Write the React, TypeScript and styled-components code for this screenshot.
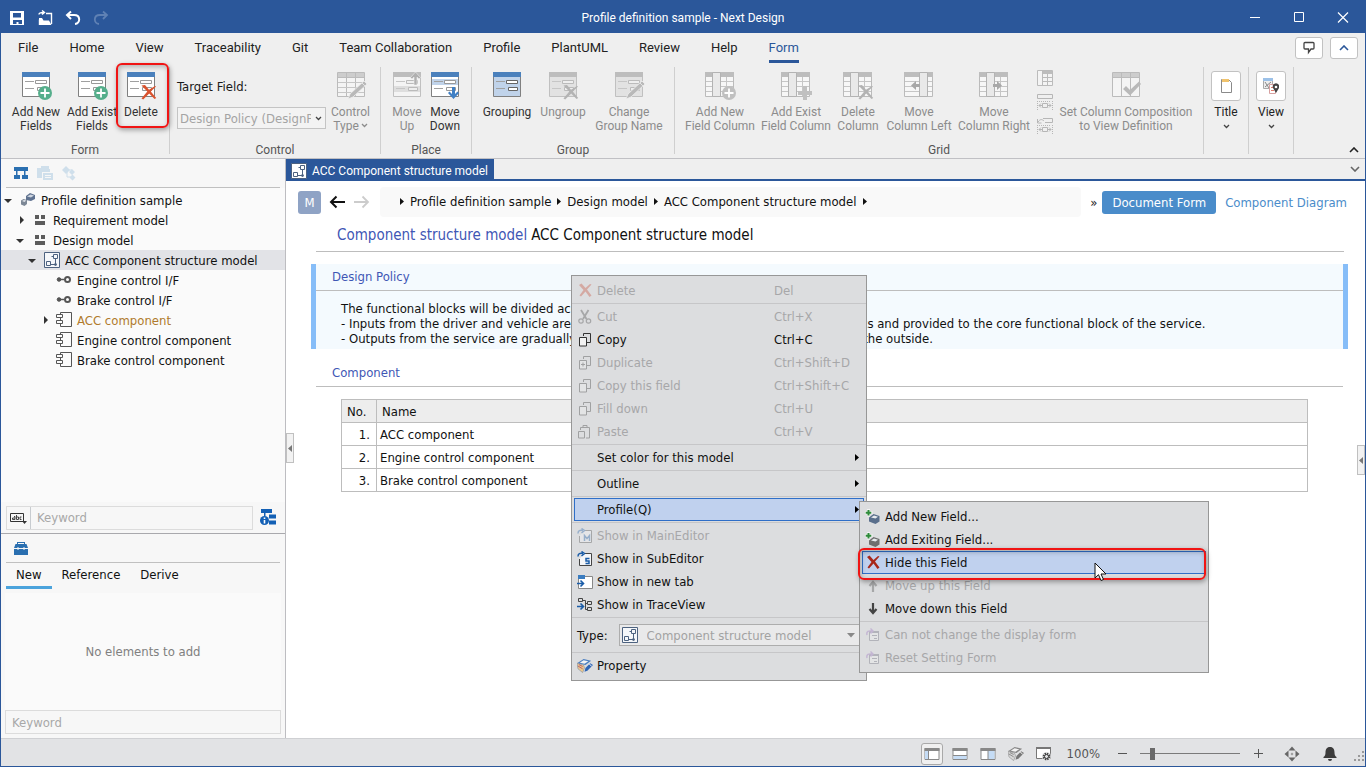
import React from "react";
import styled, { createGlobalStyle, css } from "styled-components";

const uiFont = '"DejaVu Sans Condensed", "DejaVu Sans", sans-serif';
const chromeFont = 'Roboto, "Open Sans", sans-serif';
const brand = "#2b579a";

const GlobalStyle = createGlobalStyle`
  *, *::before, *::after { box-sizing: border-box; }
  body { margin: 0; background: #fff; }
  button, input, select { font: inherit; color: inherit; margin: 0; }
  svg { display: block; flex: none; }
`;

const Window = styled.div`
  position: relative;
  min-height: 100vh;
  display: flex;
  flex-direction: column;
  border: solid ${brand};
  border-width: 0 1px 1px;
  background: #fff;
  color: #1a1a1a;
  font: 13px/15px ${uiFont};
  overflow: hidden;
`;

/* ---------- title bar ---------- */

const TitleBar = styled.header`
  display: grid;
  grid-template-columns: 1fr auto 1fr;
  align-items: center;
  height: 33px;
  padding: 2px 8px 0;
  background: ${brand};
  color: #fff;
  font: 12px/16px ${chromeFont};
`;

const QuickTools = styled.div`
  display: flex;
  gap: 12px;
`;

const WindowControls = styled.div`
  display: flex;
  justify-content: flex-end;
  gap: 28px;
  padding-right: 6px;
`;

const PlainButton = styled.button`
  display: flex;
  align-items: center;
  justify-content: center;
  min-width: 16px;
  min-height: 16px;
  padding: 0;
  border: 0;
  background: none;
`;

/* ---------- ribbon ---------- */

const TabRow = styled.nav`
  display: flex;
  align-items: flex-start;
  height: 33px;
  padding: 0 7px 0 17px;
  background: #efefef;
  font: 13px/16px ${chromeFont};
`;

const TabList = styled.div`
  display: flex;
  flex: 1;
  gap: 31px;
`;

const RibbonTab = styled.button<{ $active?: boolean }>`
  height: 30px;
  padding: 2px 0 0;
  border: 0;
  border-bottom: 3px solid ${(p) => (p.$active ? brand : "transparent")};
  background: none;
  color: ${(p) => (p.$active ? brand : "#222")};
  white-space: nowrap;
`;

const TabTools = styled.div`
  display: flex;
  gap: 7px;
  padding-top: 4px;
`;

const ToolBox = styled.button`
  display: flex;
  align-items: center;
  justify-content: center;
  width: 28px;
  height: 22px;
  padding: 0;
  border: 1px solid #c2c2c2;
  border-radius: 3px;
  background: #fff;
`;

const Ribbon = styled.div`
  display: flex;
  height: 93px;
  border-bottom: 1px solid #c0c0c4;
  background: #efefef;
  font: 12px/14px ${chromeFont};
`;

const RibbonGroup = styled.section`
  display: flex;
  flex-direction: column;
  justify-content: space-between;
  flex: none;
  margin: 1px 0 4px;
  padding: 0 7px;
  border-right: 1px solid #cfcfcf;
`;

const GroupItems = styled.div`
  display: flex;
  flex: 1;
  align-items: flex-start;
`;

const GroupLabel = styled.div`
  color: #555;
  text-align: center;
  margin-bottom: -3px;
`;

const RibbonButton = styled.button<{ $width: number }>`
  display: flex;
  flex-direction: column;
  align-items: center;
  width: ${(p) => p.$width}px;
  padding: 3px 0 0;
  border: 0;
  background: none;
  color: #333;
  line-height: 14px;
  white-space: nowrap;
  &:disabled { color: #8c8c8c; }
  svg { margin-bottom: 1px; }
`;

const DropLabel = styled.span`
  display: flex;
  align-items: center;
  gap: 2px;
`;

const TargetField = styled.div`
  display: flex;
  flex-direction: column;
  gap: 13px;
  padding-top: 12px;
  margin-right: 2px;
  font: 13px/15px ${uiFont};
`;

const SelectWrap = styled.div`
  position: relative;
  display: flex;
  min-width: 0;
  svg { position: absolute; pointer-events: none; }
`;

const FieldSelect = styled.select`
  appearance: none;
  width: 149px;
  height: 22px;
  padding: 0 14px 0 2px;
  border: 1px solid #c4c4c4;
  border-radius: 0;
  background: #f3f3f3;
  overflow: hidden;
  &:disabled { color: #a4a4a4; opacity: 1; }
  & + svg { right: 4px; top: 9px; }
`;

const SmallStack = styled.div`
  display: flex;
  flex-direction: column;
  gap: 8px;
  padding: 3px 3px 0 5px;
`;

const Highlight = styled.div`
  position: absolute;
  pointer-events: none;
  border: 2px solid #f01414;
  border-radius: 6px;
  box-shadow: 1px 2px 5px rgba(0, 0, 0, 0.35), inset 1px 2px 5px rgba(0, 0, 0, 0.25);
`;

const DeleteHighlight = styled(Highlight)`
  left: 115px;
  top: 63px;
  width: 53px;
  height: 65px;
`;

const HideHighlight = styled(Highlight)`
  left: -2px;
  right: 2px;
  top: 46px;
  height: 32px;
`;

const CardButton = styled.button`
  display: flex;
  flex-direction: column;
  align-items: center;
  width: 30px;
  padding: 4px 0 0;
  border: 0;
  background: none;
  color: #222;
  font-size: 12px;
`;

const CardFace = styled.span`
  display: flex;
  align-items: center;
  justify-content: center;
  width: 30px;
  height: 30px;
  margin-bottom: 4px;
  border: 1px solid #c2c2c2;
  border-radius: 3px;
  background: #fff;
  & + span { margin-bottom: 5px; }
`;

const RibbonCollapse = styled(PlainButton)`
  margin: auto 3px 0 auto;
`;

/* ---------- body ---------- */

const Body = styled.div`
  display: flex;
  flex: 1;
`;

const Sidebar = styled.aside`
  display: flex;
  flex-direction: column;
  flex: 0 0 285px;
  border-right: 1px solid #bdbdc1;
  background: #f7f7f7;
`;

const SideTools = styled.div`
  display: flex;
  align-items: center;
  gap: 8px;
  height: 29px;
  margin: 0 5px;
  padding: 0 7px;
  border-bottom: 1px solid #c0c0c0;
`;

const TreeList = styled.ul`
  flex: 1;
  margin: 0;
  padding: 2px 0 0;
  list-style: none;
  background: #fafafa;
`;

const TreeRow = styled.li<{ $level: number; $selected?: boolean; $accent?: boolean }>`
  display: flex;
  align-items: center;
  height: 20px;
  padding-left: ${(p) => 1 + p.$level * 12}px;
  background: ${(p) => (p.$selected ? "#e2e3e7" : "transparent")};
  color: ${(p) => (p.$accent ? "#b07a2c" : "#111")};
  white-space: nowrap;
`;

const Expander = styled.span`
  display: flex;
  justify-content: center;
  width: 12px;
  margin-right: 6px;
`;

const TreeIcon = styled.span`
  display: flex;
  justify-content: center;
  width: 16px;
  margin-right: 5px;
`;

const SearchRow = styled.div`
  display: flex;
  align-items: center;
  gap: 7px;
  height: 32px;
  padding: 0 8px 0 5px;
  border-bottom: 1px solid #a9a9ad;
`;

const SearchBox = styled.div`
  display: flex;
  flex: 1;
  height: 24px;
  border: 1px solid #dcdcdc;
`;

const SearchMode = styled(PlainButton)`
  width: 24px;
  border-right: 1px solid #c8ccd0;
`;

const keywordText = css`
  color: #222;
  background: #f7f7f7;
  &::placeholder { color: #a8a8a8; opacity: 1; }
`;

const SearchInput = styled.input`
  flex: 1;
  min-width: 0;
  padding: 0 6px;
  border: 0;
  ${keywordText}
`;

const PaletteTabs = styled.div`
  display: flex;
  padding: 0 5px;
  height: 30px;
`;

const PaletteTab = styled.button<{ $active?: boolean }>`
  height: 26px;
  padding: 0 10px;
  border: 0;
  border-bottom: 3px solid ${(p) => (p.$active ? "#4ba3dc" : "transparent")};
  background: none;
  color: #111;
`;

const PaletteEmpty = styled.div`
  display: flex;
  align-items: center;
  justify-content: center;
  height: 117px;
  margin: 0 4px;
  background: #fafafa;
  color: #808080;
`;

const PaletteInput = styled.input`
  height: 24px;
  margin: 0 4px 4px;
  padding: 0 6px;
  border: 1px solid #dcdcdc;
  ${keywordText}
`;

const Main = styled.main`
  position: relative;
  flex: 1;
  min-width: 0;
  background: #fff;
`;

const DocTabs = styled.div`
  display: flex;
  align-items: center;
  justify-content: space-between;
  height: 22px;
  padding-right: 2px;
  border-bottom: 2px solid ${brand};
  background: #efefef;
`;

const DocTab = styled.button`
  display: flex;
  align-items: center;
  gap: 5px;
  height: 22px;
  margin-bottom: -2px;
  padding: 2px 6px 0 5px;
  border: 0;
  background: ${brand};
  color: #fff;
  font: 12px/14px ${chromeFont};
  white-space: nowrap;
`;

const NavRow = styled.div`
  display: flex;
  align-items: center;
  height: 30px;
  margin: 6px 18px 0 12px;
`;

const ModelBadge = styled.span`
  width: 23px;
  margin-right: 8px;
  border-radius: 3px;
  background: #8fa3c5;
  color: #fff;
  line-height: 23px;
  text-align: center;
`;

const NavArrows = styled.div`
  display: flex;
  gap: 9px;
  margin-right: 10px;
`;

const Breadcrumbs = styled.div`
  display: flex;
  flex: 1;
  align-items: center;
  gap: 6px;
  height: 30px;
  margin-right: 9px;
  padding: 0 0 1px 20px;
  border-radius: 4px;
  background: #f9f9f9;
  color: #111;
  white-space: nowrap;
`;

const CrumbLink = styled.a`
  color: inherit;
  text-decoration: none;
`;

const ViewButton = styled.button`
  height: 23px;
  margin: 0 9px 0 5px;
  padding: 0 10px;
  border: 0;
  border-radius: 3px;
  background: #4a8cca;
  color: #fff;
`;

const ViewLink = styled.a`
  color: #4a8cca;
  text-decoration: none;
`;

const Form = styled.div`
  padding: 0 17px 0 25px;
`;

const FormTitle = styled.h1`
  display: flex;
  gap: 4px;
  margin: 0 4px 12px 5px;
  padding: 9px 0 7px 21px;
  border-bottom: 1px solid #bdbdbd;
  color: #111;
  font: 15px/18px ${uiFont};
`;

const blue = "#3f57b5";

const TitleKind = styled.span`
  color: ${blue};
`;

const Section = styled.section<{ $selected?: boolean }>`
  border: solid ${(p) => (p.$selected ? "#86bdf8" : "transparent")};
  border-width: 0 5px;
  background: ${(p) => (p.$selected ? "#f4fafe" : "transparent")};
`;

const SectionTitle = styled.h2`
  margin: 0;
  padding: 5px 0 6px 16px;
  border-bottom: 1px solid #bdbdbd;
  color: ${blue};
  font: 13px/15px ${uiFont};
`;

const Policy = styled.p`
  margin: 0;
  padding: 10px 0 3px 25px;
  color: #111;
  white-space: pre;
  overflow: hidden;
`;

const FieldTable = styled.table`
  width: calc(100% - 60px);
  margin: 12px 0 0 25px;
  border-collapse: collapse;
  color: #111;
  th, td { height: 23px; padding: 0 3px; border: 1px solid #bdbdbd; text-align: left; font-weight: normal; }
  th { background: #ededed; padding: 0 5px; }
  td:first-child { width: 35px; padding-right: 6px; text-align: right; }
`;

const SpacedSection = styled(Section)`
  margin-top: 11px;
`;

const SplitHandle = styled.button<{ $side: "left" | "right"; $top: number }>`
  position: absolute;
  ${(p) => p.$side}: 0;
  top: ${(p) => p.$top}px;
  display: flex;
  align-items: center;
  justify-content: center;
  width: 8px;
  height: 30px;
  padding: 0;
  border: 1px solid #c0c0c0;
  background: #f2f2f2;
`;

/* ---------- menus ---------- */

const Menu = styled.div`
  position: absolute;
  padding: 3px 2px;
  border: 1px solid #979797;
  background: #dcdddf;
  color: #111;
`;

const ContextMenu = styled(Menu)`
  left: 570px;
  top: 275px;
  width: 296px;
`;

const SubMenu = styled(Menu)`
  left: 858px;
  top: 501px;
  width: 350px;
`;

const MenuRow = styled.button<{ $hot?: boolean }>`
  display: flex;
  align-items: center;
  gap: 4px;
  width: 100%;
  height: 23px;
  padding: 0 4px 0 2px;
  border: 1px solid ${(p) => (p.$hot ? "#2f6fc8" : "transparent")};
  background: ${(p) => (p.$hot ? "#c0d1ee" : "transparent")};
  color: #111;
  text-align: left;
  &:disabled { color: #a7a7a9; }
  &:disabled svg { opacity: 0.35; }
`;

const MenuIcon = styled.span`
  display: flex;
  justify-content: center;
  flex: 0 0 16px;
`;

const MenuText = styled.span`
  flex: 1;
`;

const Shortcut = styled.span`
  width: 85px;
`;

const MenuRule = styled.hr`
  height: 1px;
  margin: 1px -2px;
  border: 0;
  background: #c6c6c8;
`;

const TypeRow = styled.label`
  display: flex;
  align-items: center;
  gap: 11px;
  height: 32px;
  padding-left: 3px;
`;

const TypeSelect = styled.select`
  appearance: none;
  width: 244px;
  height: 22px;
  padding: 0 0 0 27px;
  border: 1px solid #adadad;
  border-radius: 0;
  background: #e9e9ea;
  &:disabled { color: #a2a2a2; opacity: 1; }
  & ~ svg:nth-of-type(1) { left: 3px; top: 3px; }
  & ~ svg:nth-of-type(2) { right: 8px; top: 9px; }
`;

const Pointer = styled.svg`
  position: absolute;
  left: 234px;
  top: 60px;
`;

/* ---------- status bar ---------- */

const StatusBar = styled.footer`
  display: flex;
  align-items: center;
  justify-content: flex-end;
  height: 28px;
  padding-top: 2px;
  border-top: 1px solid #cfd0d3;
  background: #e2e3e5;
  color: #555;
`;

const StatusViews = styled.div`
  display: flex;
  align-items: center;
  gap: 6px;
  margin-right: 12px;
`;

const StatusButton = styled(PlainButton)<{ $active?: boolean }>`
  width: 22px;
  height: 22px;
  border: 1px solid ${(p) => (p.$active ? "#a9a9a9" : "transparent")};
  border-radius: 3px;
  background: ${(p) => (p.$active ? "#f0f0f0" : "none")};
`;

const Zoom = styled.div`
  display: flex;
  align-items: center;
  gap: 10px;
  margin: 0 18px 0 14px;
`;

const ZoomRange = styled.input`
  appearance: none;
  width: 100px;
  height: 12px;
  background: linear-gradient(#7a7a7a, #7a7a7a) center / 100% 1px no-repeat;
  &::-webkit-slider-thumb {
    appearance: none;
    width: 5px;
    height: 12px;
    background: #6a6a6a;
  }
`;

const StatusEnd = styled.div`
  display: flex;
  align-items: center;
  gap: 22px;
`;

const Grip = styled.svg`
  margin: 6px 0 0 -6px;
`;

/* ---------- icons ---------- */

const Chevron = ({ up, small, color = "#444" }: { up?: boolean; small?: boolean; color?: string }) => (
  <svg
    width={small ? 7 : 10}
    height={small ? 5 : 6}
    viewBox={small ? "0 0 7 5" : "0 0 10 6"}
    fill="none"
    stroke={color}
    strokeWidth={small ? 1.3 : 1.6}
  >
    <path d={small ? "M1 1 3.500 3.500 6 1" : up ? "M1 5 5 1 9 5" : "M1 1 5 5 9 1"} />
  </svg>
);

type Badge = "plus" | "solidPlus" | "cross" | "pencil" | "up" | "down" | "left" | "right" | "check";

const BadgeMark = ({ kind, muted }: { kind: Badge; muted?: boolean }) => {
  const tone = muted ? "#b9b9b9" : "#4a80bc";
  switch (kind) {
    case "plus":
      return (
        <g>
          <circle cx="25" cy="23" r="7" fill={muted ? "#c0c0c0" : "#55ae8b"} />
          <path d="M25 18.500v9M20.500 23h9" stroke="#fff" strokeWidth="1.800" />
        </g>
      );
    case "solidPlus":
      return <path d="M23 16h4v5h5v4h-5v5h-4v-5h-5v-4h5z" fill="#c0c0c0" />;
    case "cross":
      return (
        <path
          d="M16.500 15.500 20 15l4 4.800 6-3.800 1 .5-5.200 5 5.400 6.500-1.700 1-5.300-5.600-6 6-1.700-.8 5.800-7z"
          fill={muted ? "#b3b3b3" : "#d9532f"}
        />
      );
    case "pencil":
      return (
        <g stroke="#efefef" strokeWidth=".8" fill={tone}>
          <path d="M29 11l3 3L18 27l-5 2 2-5z" />
          <path d="M27 13l3 3" />
        </g>
      );
    case "up":
      return <path d="M24.500 2l5 5.500-1.500 1.500-2-2v8h-3V7l-2 2-1.500-1.500z" fill="#b0b0b0" stroke="#efefef" strokeWidth=".6" />;
    case "down":
      return <path d="M24.500 29l-5.500-6 1.500-1.500 2.500 2.500v-7h3v7l2.500-2.500 1.500 1.500z" fill="#3f7fc4" />;
    case "left":
      return <path d="M8 15.500l5-4.500v3h4v3h-4v3z" fill="#a8a8a8" />;
    case "right":
      return <path d="M24 15.500l-5-4.500v3h-4v3h4v3z" fill="#a8a8a8" />;
    case "check":
      return <path d="M13 19l3-3 4 4 9-8.500 2 2.500-11 11.500z" fill="#b9b9b9" />;
  }
};

const FormIcon = ({ badge, muted, fill, band }: { badge?: Badge; muted?: boolean; fill?: string; band?: "top" | "bottom" }) => {
  const line = muted ? "#c0c0c0" : "#808080";
  return (
    <svg width="34" height="34" viewBox="-1 0 34 34">
      <path d="M2.500 3.500h27v23h-27z" fill={fill ?? (muted ? "#f4f4f4" : "#fff")} stroke={line} />
      {band === "top" && <path d="M3 9h26v6H3z" fill="#c0d3ea" />}
      {band === "bottom" && <path d="M3 16h26v6H3z" fill="#dedede" />}
      <path d="M2 2h28v5H2z" fill={muted ? "#bdbdbd" : "#4a80bc"} />
      <path d="M5 11.500h9M5 18.500h9" stroke={muted ? "#c6c6c6" : "#a0a0a0"} />
      <path d="M15.500 10.500h11v3h-11zM17.500 17.500h9v3h-9z" fill={muted ? "#eee" : "#fff"} stroke={fill && !muted ? "#666" : muted ? "#bbb" : "#999"} />
      {badge && <BadgeMark kind={badge} muted={muted} />}
    </svg>
  );
};

const GridIcon = ({ badge, shift = 0 }: { badge: Badge; shift?: number }) => (
  <svg width="34" height="34" viewBox="-1 0 34 34">
    <path d="M1.500 2.500h28v24h-28z" fill="#f7f7f7" stroke="#bbb" />
    <path d="M1 2h29v5H1z" fill="#bdbdbd" />
    <path d="M2 11.500h27M2 16.500h27M2 21.500h27M22.500 7v19" stroke="#c6c6c6" />
    <path d={`M${8.5 + shift} 2.500h8v24h-8z`} fill="#e9e9e9" stroke="#b3b3b3" />
    <BadgeMark kind={badge} muted />
  </svg>
);

const PlainTableIcon = ({ badge, split }: { badge: Badge; split?: boolean }) => (
  <svg width="34" height="34" viewBox="-1 0 34 34">
    <path d="M2.500 2.500h27v24h-27z" fill="#f4f4f4" stroke="#bbb" />
    <path d="M3 3h26v4H3z" fill="#cdcdcd" />
    <path d="M2 7.500h28M11.500 3v23M20.500 3v23" stroke="#bbb" />
    {split && <path d="M3 12.500h26M3 17.500h26M3 22.500h26" stroke="#c6c6c6" />}
    <BadgeMark kind={badge} muted />
  </svg>
);

const MiniGrid = () => (
  <svg width="16" height="16" viewBox="0 0 16 16">
    <path d="M.5.5h15v15H.5z" fill="#f4f4f4" stroke="#bbb" />
    <path d="M6 1h9v3H6z" fill="#bdbdbd" />
    <path d="M5.500 1v14M6 7.500h9M6 11.500h9M10.500 4v11" stroke="#bbb" />
  </svg>
);

const MiniFit = ({ undo }: { undo?: boolean }) => (
  <svg width="16" height="16" viewBox="0 0 16 16" fill="none" stroke="#b6b6b6">
    <path d={undo ? "M6 .5h9.500v4H8M.5 1v4h4M1 4C3 1 5 1 7 3" : "M.5.5h15v4H.5z"} />
    <path d="M.5 7v9M15.500 7v9M2 7.500h12" strokeDasharray="1 1" />
    <path d="M5.500 9.500h5v4h-5zM2 11.500h3M11 11.500h3M4 9.500l-2 2 2 2M12 9.500l2 2-2 2" />
  </svg>
);

const StructureIcon = ({ dark }: { dark?: boolean }) => (
  <svg width="16" height="16" viewBox="0 0 16 16" fill="none" stroke="#4d6280">
    <path d="M.5.5h15v15H.5z" fill={dark ? "#fff" : "#f5f7fa"} />
    <path d="M9.500 2.500h4v4h-4zM2.500 9.500h4v4h-4zM11.500 7v5.500H7M7.500 4.500h2" />
    <circle cx="11.500" cy="12.500" r="1" fill="#4d6280" />
  </svg>
);

const PackageIcon = () => (
  <svg width="16" height="16" viewBox="0 0 16 16" fill="#5c5c5c">
    <path d="M3 3h4v4H3zM9 3h4v4H9zM3 9h10v4H3z" />
  </svg>
);

const ProjectIcon = () => (
  <svg width="16" height="16" viewBox="0 0 16 16">
    <path d="M6 4 10 1l5 2v4l-4 2-5-1z" fill="#5f7290" />
    <path d="M7 4.500 10.500 2.500 14 3.500 11 5.500z" fill="#cfd6e0" />
    <path d="M1 8.500 3.500 7l3.500 1v4L4.500 14 1 12.500z" fill="#7d8896" />
    <path d="M2 9l2-1 2.300.600L4.500 10z" fill="#dfe4ea" />
  </svg>
);

const InterfaceIcon = () => (
  <svg width="16" height="16" viewBox="0 0 16 16" stroke="#555">
    <circle cx="3" cy="7.500" r="1.800" fill="#555" />
    <path d="M4 7.500h4" strokeWidth="1.500" />
    <circle cx="11.500" cy="7.500" r="2.500" fill="#fafafa" strokeWidth="2" />
  </svg>
);

const ComponentIcon = () => (
  <svg width="16" height="16" viewBox="0 0 16 16" fill="#fafafa" stroke="#555">
    <path d="M4.500.5h11v14h-11z" />
    <path d="M.5 2.500h6v3h-6zM.5 8.500h6v3h-6z" />
  </svg>
);

const Triangle = ({ down }: { down?: boolean }) => (
  <svg width="8" height="8" viewBox="0 0 8 8" fill="#333">
    <path d={down ? "M0 3h8L4 7z" : "M4 0 8 4 4 8z"} />
  </svg>
);

const SmallArrow = ({ left, color = "#111" }: { left?: boolean; color?: string }) => (
  <svg width="4" height="7" viewBox="0 0 4 7" fill={color}>
    <path d={left ? "M4 0v7L0 3.500z" : "M0 0v7l4-3.500z"} />
  </svg>
);

const CrossIcon = ({ color = "#a8281a" }: { color?: string }) => (
  <svg width="15" height="15" viewBox="0 0 15 15" fill={color}>
    <path d="M1 2l2.500-1.500L7.500 5 12 1l1.500.5-4.500 5 4.500 6-2 1.500-4-5.500L3 13.500 1.500 12.500l4-5.500z" />
  </svg>
);

const copyShape = (extra?: React.ReactNode) => (
  <svg width="16" height="16" viewBox="0 0 16 16" fill="none" stroke="#333">
    <path d="M6.500 4V1.500h7v9H10" />
    <path d="M2.500 5.500h7v8.500h-7z" fill="#f2f2f2" />
    {extra}
  </svg>
);

const ScissorsIcon = () => (
  <svg width="16" height="16" viewBox="0 0 16 16" fill="none" stroke="#444" strokeWidth="1.200">
    <path d="M4 1l5.500 9M11.500 1 6 10" strokeWidth="1.800" />
    <circle cx="4" cy="12" r="2.200" />
    <circle cx="11.500" cy="12" r="2.200" />
  </svg>
);

const PasteIcon = () => (
  <svg width="16" height="16" viewBox="0 0 16 16" fill="none" stroke="#333">
    <path d="M3.500 6V3.500h9v10.500H9M6 3.500V1.500h4v2" />
    <path d="M1.500 7.500h6v6.500h-6z" />
  </svg>
);

const EditorIcon = ({ mark }: { mark: "M" | "S" }) => (
  <svg width="16" height="16" viewBox="0 0 16 16" fill="none" stroke="#444">
    <path d="M7 2.500h7.500v12h-12V8" fill="#f4f6f9" />
    <path d="M1 5.500C1 2.500 3 2 6 2.500M4.500.5l3 2-3 2.500" stroke="#1a5ca8" strokeWidth="1.500" />
    {mark === "S" ? (
      <path d="M12.500 7.500H9v2.500h3v2.500H8.500" stroke="#1a5ca8" strokeWidth="1.500" />
    ) : (
      <path d="M7.500 13V7.500l2.500 3 2.500-3V13" stroke="#1a5ca8" strokeWidth="1.500" />
    )}
  </svg>
);

const NewTabIcon = () => (
  <svg width="16" height="16" viewBox="0 0 16 16" fill="none">
    <path d="M1.500 2.500h14v12h-14z" fill="#fff" stroke="#888" />
    <path d="M1 1h7v4H1z" fill="#3a7cc0" />
    <path d="M0 9.500h6M3.500 6.500l3 3-3 3" stroke="#1a5ca8" strokeWidth="1.600" />
  </svg>
);

const TraceIcon = () => (
  <svg width="16" height="16" viewBox="0 0 16 16" fill="none" stroke="#444">
    <path d="M1.500 1.500h4v3h-4zM10.500 4.500h4v3h-4zM10.500 10.500h4v3h-4zM6 3.500h2.500v9h2M8.500 6.500h2" />
    <path d="M0 9.500h6M3.500 6.500l3 3-3 3" stroke="#1a5ca8" strokeWidth="1.600" />
  </svg>
);

const PropertyIcon = ({ gray }: { gray?: boolean }) => (
  <svg width="16" height="16" viewBox="0 0 17 16">
    <path d="M0 5 7 .5l8 2L9 7z" fill={gray ? "#888" : "#4a7ec0"} />
    <path d="M3 4.500 7 2l5 1-4 2.500z" fill="#f3f3f3" />
    <path d="M0 5l7 2 1 3-2 5-5-4z" fill={gray ? "#d8d8d8" : "#ecc98c"} stroke={gray ? "#888" : "#7a88a0"} strokeWidth=".6" />
    <path d="M1 8l5 3M2 6.500l4 2" stroke={gray ? "#888" : "#b35b6b"} />
    <path d="M8 14l1-4 5-5 3 2-6 6z" fill={gray ? "#777" : "#2f65b4"} />
    <path d="M13 6l2.500 2" stroke="#fff" />
  </svg>
);

const AddFieldIcon = ({ color }: { color: string }) => (
  <svg width="16" height="16" viewBox="0 0 16 16">
    <path d="M4 8.500 8.500 5l6 2v5.500L10.500 15 4 12.500z" fill={color} />
    <path d="M6 8.500 9 6.500l4 1.200L10.500 9.500z" fill="#e8ebef" />
    <path d="M3.500 0v7.500M0 3.700h7.500" stroke="#f4f4f4" strokeWidth="3" />
    <path d="M3.500 1v5.500M.700 3.700h5.600" stroke="#2e8b3a" strokeWidth="2" />
  </svg>
);

const ArrowIcon = ({ down }: { down?: boolean }) => (
  <svg width="16" height="16" viewBox="0 0 16 16" fill="none" stroke="#444" strokeWidth="2.200">
    <path d={down ? "M8 2v10M4.500 8 8 12l3.500-4" : "M8 14V4M4.500 8 8 4l3.500 4"} />
  </svg>
);

const FormResetIcon = () => (
  <svg width="16" height="16" viewBox="0 0 16 16" fill="none">
    <path d="M4.500 4.500h9v9h-9z" fill="#f2f2f2" stroke="#667" />
    <path d="M4 4h10v2H4z" fill="#667" />
    <path d="M7 8.500h5M9 11.500h3" stroke="#667" />
    <path d="M2 8C1 4 4 3.500 7 4M5.500 1.500 8 4 5.500 6.500" stroke="#9a6fc0" strokeWidth="1.400" />
  </svg>
);

/* ---------- data ---------- */

const ribbonTabs = ["File", "Home", "View", "Traceability", "Git", "Team Collaboration", "Profile", "PlantUML", "Review", "Help", "Form"];

type Node = { label: string; level: number; icon: React.ReactNode; open?: boolean; selected?: boolean; accent?: boolean };

const tree: Node[] = [
  { label: "Profile definition sample", level: 0, icon: <ProjectIcon />, open: true },
  { label: "Requirement model", level: 1, icon: <PackageIcon />, open: false },
  { label: "Design model", level: 1, icon: <PackageIcon />, open: true },
  { label: "ACC Component structure model", level: 2, icon: <StructureIcon />, open: true, selected: true },
  { label: "Engine control I/F", level: 3, icon: <InterfaceIcon /> },
  { label: "Brake control I/F", level: 3, icon: <InterfaceIcon /> },
  { label: "ACC component", level: 3, icon: <ComponentIcon />, open: false, accent: true },
  { label: "Engine control component", level: 3, icon: <ComponentIcon /> },
  { label: "Brake control component", level: 3, icon: <ComponentIcon /> },
];

const components = ["ACC component", "Engine control component", "Brake control component"];
const crumbs = ["Profile definition sample", "Design model", "ACC Component structure model"];

type Entry = { label: string; keys?: string; icon?: React.ReactNode; off?: boolean; more?: boolean; hot?: boolean };

const editEntries: Entry[] = [
  { label: "Cut", keys: "Ctrl+X", icon: <ScissorsIcon />, off: true },
  { label: "Copy", keys: "Ctrl+C", icon: copyShape() },
  { label: "Duplicate", keys: "Ctrl+Shift+D", icon: copyShape(<path d="M4 9.500h4M6 7.500v4" />), off: true },
  { label: "Copy this field", keys: "Ctrl+Shift+C", icon: copyShape(), off: true },
  { label: "Fill down", keys: "Ctrl+U", icon: copyShape(), off: true },
  { label: "Paste", keys: "Ctrl+V", icon: <PasteIcon />, off: true },
];

const showEntries: Entry[] = [
  { label: "Show in MainEditor", icon: <EditorIcon mark="M" />, off: true },
  { label: "Show in SubEditor", icon: <EditorIcon mark="S" /> },
  { label: "Show in new tab", icon: <NewTabIcon /> },
  { label: "Show in TraceView", icon: <TraceIcon /> },
];

const fieldEntries: Entry[] = [
  { label: "Add New Field...", icon: <AddFieldIcon color="#5a6f8c" /> },
  { label: "Add Exiting Field...", icon: <AddFieldIcon color="#6f6f6f" /> },
  { label: "Hide this Field", icon: <CrossIcon />, hot: true },
  { label: "Move up this Field", icon: <ArrowIcon />, off: true },
  { label: "Move down this Field", icon: <ArrowIcon down /> },
];

const MenuEntry = ({ label, keys, icon, off, more, hot }: Entry) => (
  <MenuRow type="button" disabled={off} $hot={hot}>
    <MenuIcon>{icon}</MenuIcon>
    <MenuText>{label}</MenuText>
    {keys && <Shortcut>{keys}</Shortcut>}
    {more && <SmallArrow color="#000" />}
  </MenuRow>
);

const policy = [
  "The functional blocks will be divided according to the policies below.",
  "- Inputs from the driver and vehicle are gradually abstracted by the dedicated input blocks and provided to the core functional block of the service.",
  "- Outputs from the service are gradually made explicit by the blocks and then sent on to the outside.",
].join("\n");

export default function App() {
  return (
    <Window>
      <GlobalStyle />
      <TitleBar>
        <QuickTools>
          <PlainButton aria-label="Save">
            <svg width="16" height="16" viewBox="0 0 16 16">
              <path d="M1 1h14v14H1z" fill="#fff" />
              <path d="M4 3h8v4.500H4zM4 10h9v4H9.500v-2h-2v2H4z" fill={brand} />
            </svg>
          </PlainButton>
          <PlainButton aria-label="Open">
            <svg width="16" height="16" viewBox="0 0 16 16">
              <path d="M2.500 15V9.500M2 4.500c0-2 2-2 4.500-2M5 .5l2.500 2L5 4.500M9 3.500h5.500V14" fill="none" stroke="#fff" strokeWidth="1.400" />
              <path d="M2 15V8h3l1.500 2.500H12L14.500 15z" fill="#fff" />
            </svg>
          </PlainButton>
          <PlainButton aria-label="Undo">
            <svg width="16" height="16" viewBox="0 0 16 16" fill="none" stroke="#fff" strokeWidth="2">
              <path d="M6 1.500 2 5l4 4M2.500 5H9c7 0 6.500 8.500 1 9" />
            </svg>
          </PlainButton>
          <PlainButton aria-label="Redo" disabled>
            <svg width="16" height="16" viewBox="0 0 16 16" fill="none" stroke="#5f81b4" strokeWidth="1.800">
              <path d="M10 1.500 14 5l-4 4M13.500 5H7c-7 0-6.500 8.500-1 9" />
            </svg>
          </PlainButton>
        </QuickTools>
        <span>Profile definition sample - Next Design</span>
        <WindowControls>
          <PlainButton aria-label="Minimize">
            <svg width="16" height="16" viewBox="0 0 16 16" stroke="#fff"><path d="M3 7.500h10" /></svg>
          </PlainButton>
          <PlainButton aria-label="Maximize">
            <svg width="16" height="16" viewBox="0 0 16 16" fill="none" stroke="#fff"><path d="M3.500 2.500h9v9h-9z" /></svg>
          </PlainButton>
          <PlainButton aria-label="Close">
            <svg width="16" height="16" viewBox="0 0 16 16" stroke="#fff" strokeWidth="1.200"><path d="M3 2.500l10 10M13 2.500l-10 10" /></svg>
          </PlainButton>
        </WindowControls>
      </TitleBar>

      <TabRow>
        <TabList>
          {ribbonTabs.map((t) => (
            <RibbonTab key={t} $active={t === "Form"}>{t}</RibbonTab>
          ))}
        </TabList>
        <TabTools>
          <ToolBox aria-label="Comments">
            <svg width="14" height="14" viewBox="0 0 14 14" fill="none" stroke="#444" strokeWidth="1.300">
              <path d="M3 1.500h8q1 0 1 1v4.500q0 1-1 1H9L6.500 11.500V8H3Q2 8 2 7V2.500q0-1 1-1z" />
            </svg>
          </ToolBox>
          <ToolBox aria-label="Collapse tabs"><Chevron up color={brand} /></ToolBox>
        </TabTools>
      </TabRow>

      <Ribbon>
        <RibbonGroup>
          <GroupItems>
            <RibbonButton $width={56}><FormIcon badge="plus" />Add New<br />Fields</RibbonButton>
            <RibbonButton $width={56}><FormIcon badge="plus" />Add Exist<br />Fields</RibbonButton>
            <RibbonButton $width={42}><FormIcon badge="cross" />Delete</RibbonButton>
          </GroupItems>
          <GroupLabel>Form</GroupLabel>
        </RibbonGroup>
        <RibbonGroup>
          <GroupItems>
            <TargetField>
              <label htmlFor="target-field">Target Field:</label>
              <SelectWrap>
                <FieldSelect id="target-field" disabled>
                  <option>Design Policy (DesignPolicy)</option>
                </FieldSelect>
                <Chevron small />
              </SelectWrap>
            </TargetField>
            <RibbonButton $width={45} disabled>
              <PlainTableIcon badge="pencil" split />Control
              <DropLabel>Type <Chevron small color="#8c8c8c" /></DropLabel>
            </RibbonButton>
          </GroupItems>
          <GroupLabel>Control</GroupLabel>
        </RibbonGroup>
        <RibbonGroup>
          <GroupItems>
            <RibbonButton $width={38} disabled><FormIcon badge="up" muted band="bottom" />Move<br />Up</RibbonButton>
            <RibbonButton $width={38}><FormIcon badge="down" band="top" />Move<br />Down</RibbonButton>
          </GroupItems>
          <GroupLabel>Place</GroupLabel>
        </RibbonGroup>
        <RibbonGroup>
          <GroupItems>
            <RibbonButton $width={56}><FormIcon fill="#c0d3ea" />Grouping</RibbonButton>
            <RibbonButton $width={56} disabled><FormIcon badge="cross" muted fill="#e2e2e2" />Ungroup</RibbonButton>
            <RibbonButton $width={76} disabled><FormIcon badge="pencil" muted fill="#e2e2e2" />Change<br />Group Name</RibbonButton>
          </GroupItems>
          <GroupLabel>Group</GroupLabel>
        </RibbonGroup>
        <RibbonGroup>
          <GroupItems>
            <RibbonButton $width={76} disabled><GridIcon badge="plus" />Add New<br />Field Column</RibbonButton>
            <RibbonButton $width={76} disabled><GridIcon badge="solidPlus" />Add Exist<br />Field Column</RibbonButton>
            <RibbonButton $width={48} disabled><GridIcon badge="cross" />Delete<br />Column</RibbonButton>
            <RibbonButton $width={74} disabled><GridIcon badge="left" shift={8} />Move<br />Column Left</RibbonButton>
            <RibbonButton $width={76} disabled><GridIcon badge="right" />Move<br />Column Right</RibbonButton>
            <SmallStack>
              <PlainButton aria-label="Grid columns" disabled><MiniGrid /></PlainButton>
              <PlainButton aria-label="Fit width" disabled><MiniFit /></PlainButton>
              <PlainButton aria-label="Reset width" disabled><MiniFit undo /></PlainButton>
            </SmallStack>
            <RibbonButton $width={140} disabled><PlainTableIcon badge="check" />Set Column Composition<br />to View Definition</RibbonButton>
          </GroupItems>
          <GroupLabel>Grid</GroupLabel>
        </RibbonGroup>
        <RibbonGroup>
          <CardButton>
            <CardFace>
              <svg width="14" height="16" viewBox="0 0 14 16">
                <path d="M2.500 1.500h7l3 3v10h-10z" fill="#fff" stroke="#8a8a8a" />
                <path d="M3 1h7v3H3z" fill="#f0c36d" />
              </svg>
            </CardFace>
            <span>Title</span>
            <Chevron small />
          </CardButton>
        </RibbonGroup>
        <RibbonGroup>
          <CardButton>
            <CardFace>
              <svg width="16" height="16" viewBox="0 0 16 16" fill="none">
                <path d="M.5 1.500h9v9h-9z" stroke="#aaa" fill="#eee" />
                <path d="M0 0h10v3H0z" fill="#9cc1e8" />
                <path d="M2 9l6-5M2 4l4 6" stroke="#888" />
                <path d="M6.500 6.500h6v9h-6z" fill="#fff" stroke="#d6a0a0" />
                <path d="M8 9.500h3M8 12.500h3" stroke="#e07a6a" />
                <path d="M13 15l-3-5a3.300 3.300 0 1 1 6 0z" fill="#444" />
                <circle cx="13" cy="9" r="1.300" fill="#fff" />
              </svg>
            </CardFace>
            <span>View</span>
            <Chevron small />
          </CardButton>
        </RibbonGroup>
        <RibbonCollapse aria-label="Collapse ribbon"><Chevron up color="#222" /></RibbonCollapse>
      </Ribbon>

      <Body>
        <Sidebar>
          <SideTools>
            <PlainButton aria-label="Model tree">
              <svg width="16" height="16" viewBox="0 0 16 16" fill="#2a6fb0">
                <path d="M1 2h14v4H1zM1 10h6v4H1zM9 10h6v4H9z" />
                <path d="M3 6h1.500v4H3zM11 6h1.500v4H11z" />
              </svg>
            </PlainButton>
            <PlainButton aria-label="Project files">
              <svg width="16" height="16" viewBox="0 0 16 16" fill="#cfdfeb">
                <path d="M0 3h4V1h8v3h1v3H5v6H0zM6 8h10v7H6z" />
                <path d="M8 10.500h6M8 12.500h6" stroke="#f7f7f7" />
              </svg>
            </PlainButton>
            <PlainButton aria-label="Trace tree">
              <svg width="16" height="16" viewBox="0 0 16 16" fill="#cfdfeb">
                <path d="M5 1l4 4-4 4-4-4zM11 4l3 3-3 3-3-3zM11.500 9.500l3 3-3 3-3-3z" />
                <path d="M5 5h6M6 6v6h5" fill="none" stroke="#cfdfeb" />
              </svg>
            </PlainButton>
          </SideTools>
          <TreeList>
            {tree.map((n) => (
              <TreeRow key={n.label} $level={n.level} $selected={n.selected} $accent={n.accent}>
                <Expander>{n.open !== undefined && <Triangle down={n.open} />}</Expander>
                <TreeIcon>{n.icon}</TreeIcon>
                {n.label}
              </TreeRow>
            ))}
          </TreeList>
          <SearchRow>
            <SearchBox>
              <SearchMode aria-label="Match mode">
                <svg width="17" height="12" viewBox="0 0 17 12" fill="none" stroke="#333">
                  <path d="M.5 1.500h13v8H.5z" />
                  <path d="M4 4.500h1v3H2.500v-1.500H5M6.500 3v4.500H8.500v-2.500H7M11.500 5h-1.500v2.500h1.500" strokeWidth=".9" />
                  <path d="M12 9h5l-2.500 3z" fill="#333" stroke="none" />
                </svg>
              </SearchMode>
              <SearchInput aria-label="Search models" placeholder="Keyword" />
            </SearchBox>
            <PlainButton aria-label="Search options">
              <svg width="17" height="17" viewBox="0 0 17 17">
                <path d="M1 0h11v4H1zM9 5.500h7v4H9zM9 11.500h7v4H9zM4 4h1.500v3H4z" fill="#1360b5" />
                <circle cx="4.500" cy="11.500" r="4.500" fill="#1360b5" />
                <path d="M4.500 8.500v1.500M4.500 11v3.500" stroke="#fff" strokeWidth="1.600" />
              </svg>
            </PlainButton>
          </SearchRow>
          <SideTools>
            <PlainButton aria-label="Toolbox">
              <svg width="16" height="16" viewBox="0 0 16 16" fill="#2a6fb0">
                <path d="M4 2h8v2h1.500L15 8H1l1.500-4H4zM1 9h14v6H1z" />
                <path d="M5 3.500h6M5 7v3M11 7v3" stroke="#f7f7f7" />
              </svg>
            </PlainButton>
          </SideTools>
          <PaletteTabs>
            <PaletteTab $active>New</PaletteTab>
            <PaletteTab>Reference</PaletteTab>
            <PaletteTab>Derive</PaletteTab>
          </PaletteTabs>
          <PaletteEmpty>No elements to add</PaletteEmpty>
          <PaletteInput aria-label="Search palette" placeholder="Keyword" />
        </Sidebar>

        <Main>
          <DocTabs>
            <DocTab><StructureIcon dark />ACC Component structure model</DocTab>
            <PlainButton aria-label="Open documents"><Chevron color="#666" /></PlainButton>
          </DocTabs>
          <NavRow>
            <ModelBadge>M</ModelBadge>
            <NavArrows>
              <PlainButton aria-label="Back">
                <svg width="16" height="14" viewBox="0 0 16 14" fill="none" stroke="#111" strokeWidth="2"><path d="M16 7H2M7.500 1.500 2 7l5.500 5.500" /></svg>
              </PlainButton>
              <PlainButton aria-label="Forward" disabled>
                <svg width="16" height="14" viewBox="0 0 16 14" fill="none" stroke="#ccc" strokeWidth="1.800"><path d="M0 7h14M8.500 1.500 14 7l-5.500 5.500" /></svg>
              </PlainButton>
            </NavArrows>
            <Breadcrumbs>
              <SmallArrow />
              {crumbs.map((c) => (
                <React.Fragment key={c}>
                  <CrumbLink href="#">{c}</CrumbLink>
                  <SmallArrow />
                </React.Fragment>
              ))}
            </Breadcrumbs>
            <span>»</span>
            <ViewButton>Document Form</ViewButton>
            <ViewLink href="#">Component Diagram</ViewLink>
          </NavRow>

          <Form>
            <FormTitle><TitleKind>Component structure model</TitleKind><span>ACC Component structure model</span></FormTitle>
            <Section $selected>
              <SectionTitle>Design Policy</SectionTitle>
              <Policy>{policy}</Policy>
            </Section>
            <SpacedSection>
              <SectionTitle>Component</SectionTitle>
              <FieldTable>
                <thead>
                  <tr><th>No.</th><th>Name</th></tr>
                </thead>
                <tbody>
                  {components.map((c, i) => (
                    <tr key={c}><td>{i + 1}.</td><td>{c}</td></tr>
                  ))}
                </tbody>
              </FieldTable>
            </SpacedSection>
          </Form>
          <SplitHandle $side="left" $top={274} aria-label="Collapse navigator"><SmallArrow left color="#777" /></SplitHandle>
          <SplitHandle $side="right" $top={286} aria-label="Open inspector"><SmallArrow left color="#777" /></SplitHandle>
        </Main>
      </Body>

      <StatusBar>
        <StatusViews>
          <StatusButton $active aria-label="Left pane">
            <svg width="16" height="14" viewBox="0 0 16 14"><path d="M1 1.500h14v11H1z" fill="#fff" stroke="#888" /><path d="M1 3h3.500v9H1z" fill="#c5dcf5" /><path d="M.5 1h15v3H.5z" fill="#888" /><path d="M4.500 4v8.500" stroke="#888" /></svg>
          </StatusButton>
          <StatusButton aria-label="Bottom pane">
            <svg width="16" height="14" viewBox="0 0 16 14"><path d="M1 1.500h14v11H1z" fill="#fff" stroke="#888" /><path d="M1.500 9h13v3h-13z" fill="#c5dcf5" /><path d="M.5 1h15v3H.5z" fill="#888" /><path d="M1 8.500h14" stroke="#888" /></svg>
          </StatusButton>
          <StatusButton aria-label="Right pane">
            <svg width="16" height="14" viewBox="0 0 16 14"><path d="M1 1.500h14v11H1z" fill="#fff" stroke="#888" /><path d="M8 3h6.500v9H8z" fill="#c5dcf5" /><path d="M.5 1h15v3H.5z" fill="#888" /><path d="M8 4v8.500" stroke="#888" /></svg>
          </StatusButton>
          <StatusButton aria-label="Properties"><PropertyIcon gray /></StatusButton>
          <StatusButton aria-label="Display settings">
            <svg width="17" height="16" viewBox="0 0 17 16" fill="none"><path d="M1.500 1.500h14v11h-14z" fill="#fff" stroke="#777" /><path d="M1 1h15v2H1z" fill="#777" /><circle cx="11.500" cy="10.500" r="4.500" fill="#e2e3e5" /><circle cx="11.500" cy="10.500" r="2.800" stroke="#444" strokeWidth="2" strokeDasharray="1.400 .8" /><circle cx="11.500" cy="10.500" r="2" stroke="#444" /></svg>
          </StatusButton>
        </StatusViews>
        <span>100%</span>
        <Zoom>
          <PlainButton aria-label="Zoom out"><svg width="9" height="9" viewBox="0 0 9 9" stroke="#555"><path d="M0 4.500h9" /></svg></PlainButton>
          <ZoomRange type="range" aria-label="Zoom" min={0} max={100} defaultValue={10} />
          <PlainButton aria-label="Zoom in"><svg width="9" height="9" viewBox="0 0 9 9" stroke="#555"><path d="M0 4.500h9M4.500 0v9" /></svg></PlainButton>
        </Zoom>
        <StatusEnd>
          <PlainButton aria-label="Fit to window">
            <svg width="16" height="16" viewBox="0 0 16 16" fill="#666"><path d="M8 .5l3.500 4h-7zM8 15.500l3.500-4h-7zM.5 8l4-3.500v7zM15.500 8l-4-3.500v7z" /><path d="M6.500 8 8 6.500 9.500 8 8 9.500z" fill="#999" /></svg>
          </PlainButton>
          <PlainButton aria-label="Notifications">
            <svg width="16" height="16" viewBox="0 0 16 16" fill="#3c3c3c"><path d="M8 1c3.500 0 4.500 2.500 4.500 5.500 0 2.500.500 3.500 2 4.500v1h-13v-1c1.500-1 2-2 2-4.500C3.500 3.500 4.500 1 8 1zM6 13h4q0 2-2 2t-2-2z" /></svg>
          </PlainButton>
          <Grip width="11" height="11" viewBox="0 0 11 11" fill="#999"><path d="M8 0h2v2H8zM4 4h2v2H4zM8 4h2v2H8zM0 8h2v2H0zM4 8h2v2H4zM8 8h2v2H8z" /></Grip>
        </StatusEnd>
      </StatusBar>

      <DeleteHighlight />

      <ContextMenu>
        <MenuEntry label="Delete" keys="Del" icon={<CrossIcon color="#c84a34" />} off />
        <MenuRule />
        {editEntries.map((e) => <MenuEntry key={e.label} {...e} />)}
        <MenuRule />
        <MenuEntry label="Set color for this model" more />
        <MenuRule />
        <MenuEntry label="Outline" more />
        <MenuRule />
        <MenuEntry label="Profile(Q)" more hot />
        <MenuRule />
        {showEntries.map((e) => <MenuEntry key={e.label} {...e} />)}
        <MenuRule />
        <TypeRow>
          Type:
          <SelectWrap>
            <TypeSelect disabled><option>Component structure model</option></TypeSelect>
            <StructureIcon />
            <svg width="8" height="5" viewBox="0 0 8 5" fill="#888"><path d="M0 0h8L4 4.500z" /></svg>
          </SelectWrap>
        </TypeRow>
        <MenuRule />
        <MenuEntry label="Property" icon={<PropertyIcon />} />
      </ContextMenu>

      <SubMenu>
        {fieldEntries.map((e) => <MenuEntry key={e.label} {...e} />)}
        <MenuRule />
        <MenuEntry label="Can not change the display form" icon={<FormResetIcon />} off />
        <MenuEntry label="Reset Setting Form" icon={<FormResetIcon />} off />
        <HideHighlight />
        <Pointer width="13" height="20" viewBox="0 0 13 20">
          <path d="M1 1v15l3.500-3.300L7 18.500l2.500-1-2.500-5.500h5z" fill="#fff" stroke="#111" />
        </Pointer>
      </SubMenu>
    </Window>
  );
}
